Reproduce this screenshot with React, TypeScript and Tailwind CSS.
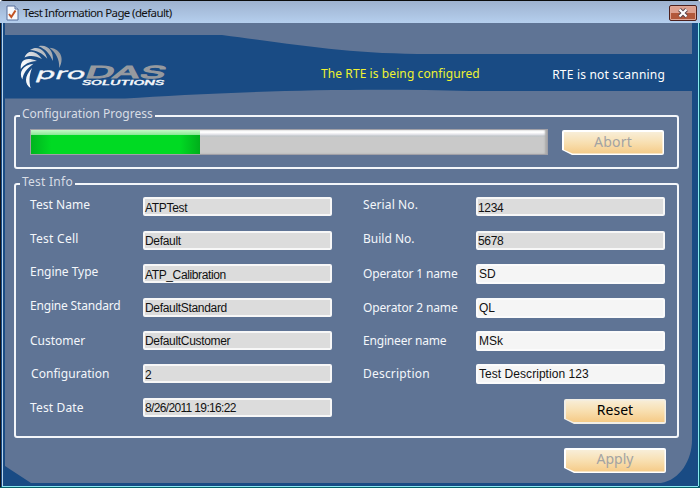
import React from "react";

const label = "font-['Noto_Sans',sans-serif] text-[12px] leading-[16px] text-[#f4f7fb] whitespace-nowrap";

type FieldProps = {
  name: string;
  value: string;
  tracking: string;
  shift?: string;
  editable?: boolean;
  valueClass?: string;
};

function Field({ name, value, tracking, shift = "", editable = false, valueClass = "tracking-[-0.32px]" }: FieldProps) {
  return (
    <div className="flex h-[33.4px] items-start justify-between">
      <span className={`${label} ${tracking} relative ${shift}`}>{name}</span>
      <div
        className={`flex w-[189px] shrink-0 items-center rounded-[2px] border-2 font-['Liberation_Sans',Arial,sans-serif] text-[12px] leading-[14px] whitespace-nowrap text-[#111] ${
          editable ? "h-5 border-[#fbfbfb] bg-[#f5f5f5] pl-px" : "h-[19px] border-[#f7f7f7] bg-[#dcdcdc] pt-[2px]"
        } ${valueClass}`}
      >
        {value}
      </div>
    </div>
  );
}

function CutButton({ text, disabled = false, textClass }: { text: string; disabled?: boolean; textClass: string }) {
  return (
    <button
      className={`flex h-[25px] w-[102px] rounded-[2px] p-[1.5px] [clip-path:polygon(0_0,100%_0,100%_100%,10px_100%,0_20px)] ${disabled ? "bg-white" : "bg-[#f2eee5]"}`}
    >
      <span
        className={`flex h-full w-full items-center justify-center bg-linear-to-b from-[#f8eed8] via-[#f8dfb0] to-[#f5ca86] font-['Noto_Sans',sans-serif] leading-none [clip-path:polygon(0_0,100%_0,100%_100%,9px_100%,0_18px)] ${
          disabled ? "text-[#a3a3a3]" : "text-black"
        } ${textClass}`}
      >
        {text}
      </span>
    </button>
  );
}

function Logo() {
  return (
    <svg width="152" height="48" viewBox="18 43 152 48" className="block">
      <defs>
        <linearGradient id="blade" gradientUnits="userSpaceOnUse" x1="26" y1="78" x2="60" y2="52">
          <stop offset="0.2" stopColor="#f4f7fa" />
          <stop offset="1" stopColor="#8d939b" />
        </linearGradient>
      </defs>
      <g fill="url(#blade)">
        <path d="M30.7 88.3 C24.5 84 24 76.5 32 68 C29 76 29 82 30.7 88.3Z" />
        <path d="M22.3 79.5 C18.5 72 22.5 65.5 33.5 63.8 C26.5 69 23.5 73 22.3 79.5Z" />
        <path d="M20.8 69 C20 60 26 56.5 37 61 C29 61.5 24.5 64 20.8 69Z" />
        <path d="M24.5 57.5 C27.5 49.5 35.5 50 42 59 C35.5 56 31 55 24.5 57.5Z" />
        <path d="M30 50 C37.5 45 45 49.5 47.3 58.8 C42 53 37 50.5 30 50Z" />
        <path d="M38.5 46.3 C47.5 44 54 51 52.8 61 C49.5 53.5 45.5 49 38.5 46.3Z" />
        <path d="M49.5 47.8 C58.5 48.5 65.5 56 59.3 68 C59.5 59 56 53 49.5 47.8Z" />
      </g>
      <g transform="skewX(-20)" fontFamily="Inter, sans-serif" fontWeight="400">
        <text x="63.5" y="78.7" fontSize="15.5" fill="#f4f7fa" stroke="#f4f7fa" strokeWidth="0.3" textLength="49" lengthAdjust="spacingAndGlyphs">pro</text>
        <text x="112.5" y="78.3" fontSize="16.5" fill="#969a9f" stroke="#969a9f" strokeWidth="1" textLength="80" lengthAdjust="spacingAndGlyphs">DAS</text>
      </g>
      <text x="82" y="85.2" fontSize="5.8" fontStyle="italic" fontWeight="500" fontFamily="Inter, sans-serif" fill="#f4f7fa" stroke="#f4f7fa" strokeWidth="0.3" textLength="82" lengthAdjust="spacingAndGlyphs">SOLUTIONS</text>
    </svg>
  );
}

function TitleBar() {
  return (
    <header className="flex h-[23px] shrink-0 items-center border-t border-[#0b0b0b] bg-linear-to-b from-[#9eb2cf] to-[#b5cfee] pr-[3px] pl-[6px]">
      <svg width="13" height="16" viewBox="0 0 13 16" className="mt-px shrink-0">
        <path d="M1 1h8l3 3v11H1z" fill="#f7f9fd" stroke="#566e9b" />
        <path d="M9 1v3h3" fill="#c9d6ec" stroke="#566e9b" />
        <path d="M3 9l2.3 3L9.5 5.5" fill="none" stroke="#c15325" strokeWidth="2" />
      </svg>
      <h1 className="mt-[2px] ml-1 font-['Noto_Sans',sans-serif] text-[11.5px] leading-4 tracking-[-0.62px] whitespace-nowrap text-[#111]">
        Test Information Page (default)
      </h1>
      <button className="mt-[2px] ml-auto flex h-4 w-7 items-center justify-center rounded-[2px] border border-[#4d201c] bg-linear-to-b from-[#dea08f] from-50% to-[#b2583b] to-50% shadow-[inset_0_0_0_1px_#dfa797]">
        <svg width="12" height="10" viewBox="0 0 12 10">
          <path d="M2.5 1.5l7 7m0-7l-7 7" stroke="#5a464c" strokeWidth="4" />
          <path d="M2.5 1.5l7 7m0-7l-7 7" stroke="white" strokeWidth="2.2" />
        </svg>
      </button>
    </header>
  );
}

const group = "mx-[9px] min-w-0 rounded-[3px] border-2 border-[#f3f6fa]";
const legend = "ml-[4px] px-[2px] font-['Noto_Sans',sans-serif] text-[12px] leading-4 text-[#d8dde5] whitespace-nowrap";

export default function App() {
  return (
    <div className="flex h-[488px] w-[700px] flex-col overflow-hidden rounded-t-[4px] bg-[#5f7495]">
      <TitleBar />
      <main className="relative isolate flex min-h-0 flex-1 flex-col pr-[12px] pl-[5px]">
        <svg className="absolute inset-0 -z-10" width="700" height="465" viewBox="0 23 700 465">
          <path d="M5 35H222C300 45 350 54 430 54H692V91H470C340 87 205 93 125 98.5H5Z" fill="#194b84" />
          <path d="M5 466L31 483H661C680 480 692 460 692 440V23H700V488H0V23H5Z" fill="#194b84" />
          <path d="M0.5 23V488" stroke="#10141c" />
          <path d="M2.5 23V486" stroke="#b9d5ec" />
          <path d="M698.5 23V486M2 486.5H698" stroke="#8aeaf2" fill="none" />
          <path d="M699.5 23V488M0 487.5H700" stroke="#075e68" fill="none" />
        </svg>

        <section className="flex h-[85px] shrink-0 items-start pt-5">
          <div className="ml-[13px]"><Logo /></div>
          <p className="mt-[23px] ml-[151px] font-['Noto_Sans',sans-serif] text-[12px] leading-4 tracking-[0.09px] whitespace-nowrap text-[#eff331]">
            The RTE is being configured
          </p>
          <p className="mt-[24px] mr-[23px] ml-auto font-['Noto_Sans',sans-serif] text-[12px] leading-4 tracking-[0.2px] whitespace-nowrap text-white">
            RTE is not scanning
          </p>
        </section>

        <fieldset className={`${group} h-[61px] shrink-0`}>
          <legend className={legend}><span className="relative -top-[2px] tracking-[0.01px]">Configuration Progress</span></legend>
          <div className="flex items-start pl-[14px]">
            <div className="mt-[5px] flex h-[26px] w-[518px] border border-[#a1a0a7] bg-linear-to-b from-white from-10% via-[#dedee4] via-20% to-[#bec5c8] to-25%">
              <div className="w-[169px] bg-linear-to-r from-[#00b51e] via-[#00da23] via-12% to-[#00da23] to-88%">
                <div className="h-full w-full bg-linear-to-r from-transparent from-88% to-[#00ae1b]">
                  <div className="h-[5px] bg-linear-to-b from-[#c5f9c7] to-[#87e794]" />
                </div>
              </div>
              <div className="h-full flex-1 bg-linear-to-b from-transparent from-25% to-[#c9c9c9] to-30% shadow-[inset_-2px_0_2px_#aaa]" />
            </div>
            <div className="mt-[6px] ml-[14px]"><CutButton text="Abort" disabled textClass="text-[14px] tracking-[0.2px] pb-[2px]" /></div>
          </div>
        </fieldset>

        <fieldset className={`${group} mt-[7px] h-[262px] shrink-0`}>
          <legend className={legend}><span className="relative -top-[2px] tracking-[0.25px]">Test Info</span></legend>
          <div className="flex pt-[5.4px] pl-[14px]">
            <div className="w-[302px]">
              <Field name="Test Name" value="ATPTest" tracking="tracking-[0.05px]" />
              <Field name="Test Cell" value="Default" tracking="tracking-[0.25px]" />
              <Field name="Engine Type" value="ATP_Calibration" tracking="tracking-[-0.03px]" valueClass="tracking-[-0.38px]" />
              <Field name="Engine Standard" value="DefaultStandard" tracking="tracking-[-0.18px]" />
              <Field name="Customer" value="DefaultCustomer" tracking="tracking-[0px]" shift="top-[2px]" />
              <Field name="Configuration" value="2" tracking="tracking-[0.05px]" shift="top-[2px] left-px" />
              <Field name="Test Date" value="8/26/2011 19:16:22" tracking="tracking-[0.15px]" shift="top-[2px]" valueClass="tracking-[-0.65px]" />
            </div>
            <div className="ml-[31px] w-[302px]">
              <Field name="Serial No." value="1234" tracking="tracking-[0.1px]" />
              <Field name="Build No." value="5678" tracking="tracking-[0px]" />
              <Field name="Operator 1 name" value="SD" tracking="tracking-[-0.15px]" editable shift="top-[1.5px]" valueClass="" />
              <Field name="Operator 2 name" value="QL" tracking="tracking-[-0.15px]" editable shift="top-[2px]" valueClass="" />
              <Field name="Engineer name" value="MSk" tracking="tracking-[-0.18px]" editable shift="top-[2px]" valueClass="" />
              <Field name="Description" value="Test Description 123" tracking="tracking-[0.2px]" editable shift="top-[2px]" valueClass="tracking-[0.05px]" />
              <div className="-mr-px flex justify-end pt-[1.2px]"><CutButton text="Reset" textClass="text-[14px] pb-[3px]" /></div>
            </div>
          </div>
        </fieldset>

        <div className="mt-[10px] mr-[22px] flex justify-end">
          <CutButton text="Apply" disabled textClass="text-[14px] pb-[3px]" />
        </div>
      </main>
    </div>
  );
}
